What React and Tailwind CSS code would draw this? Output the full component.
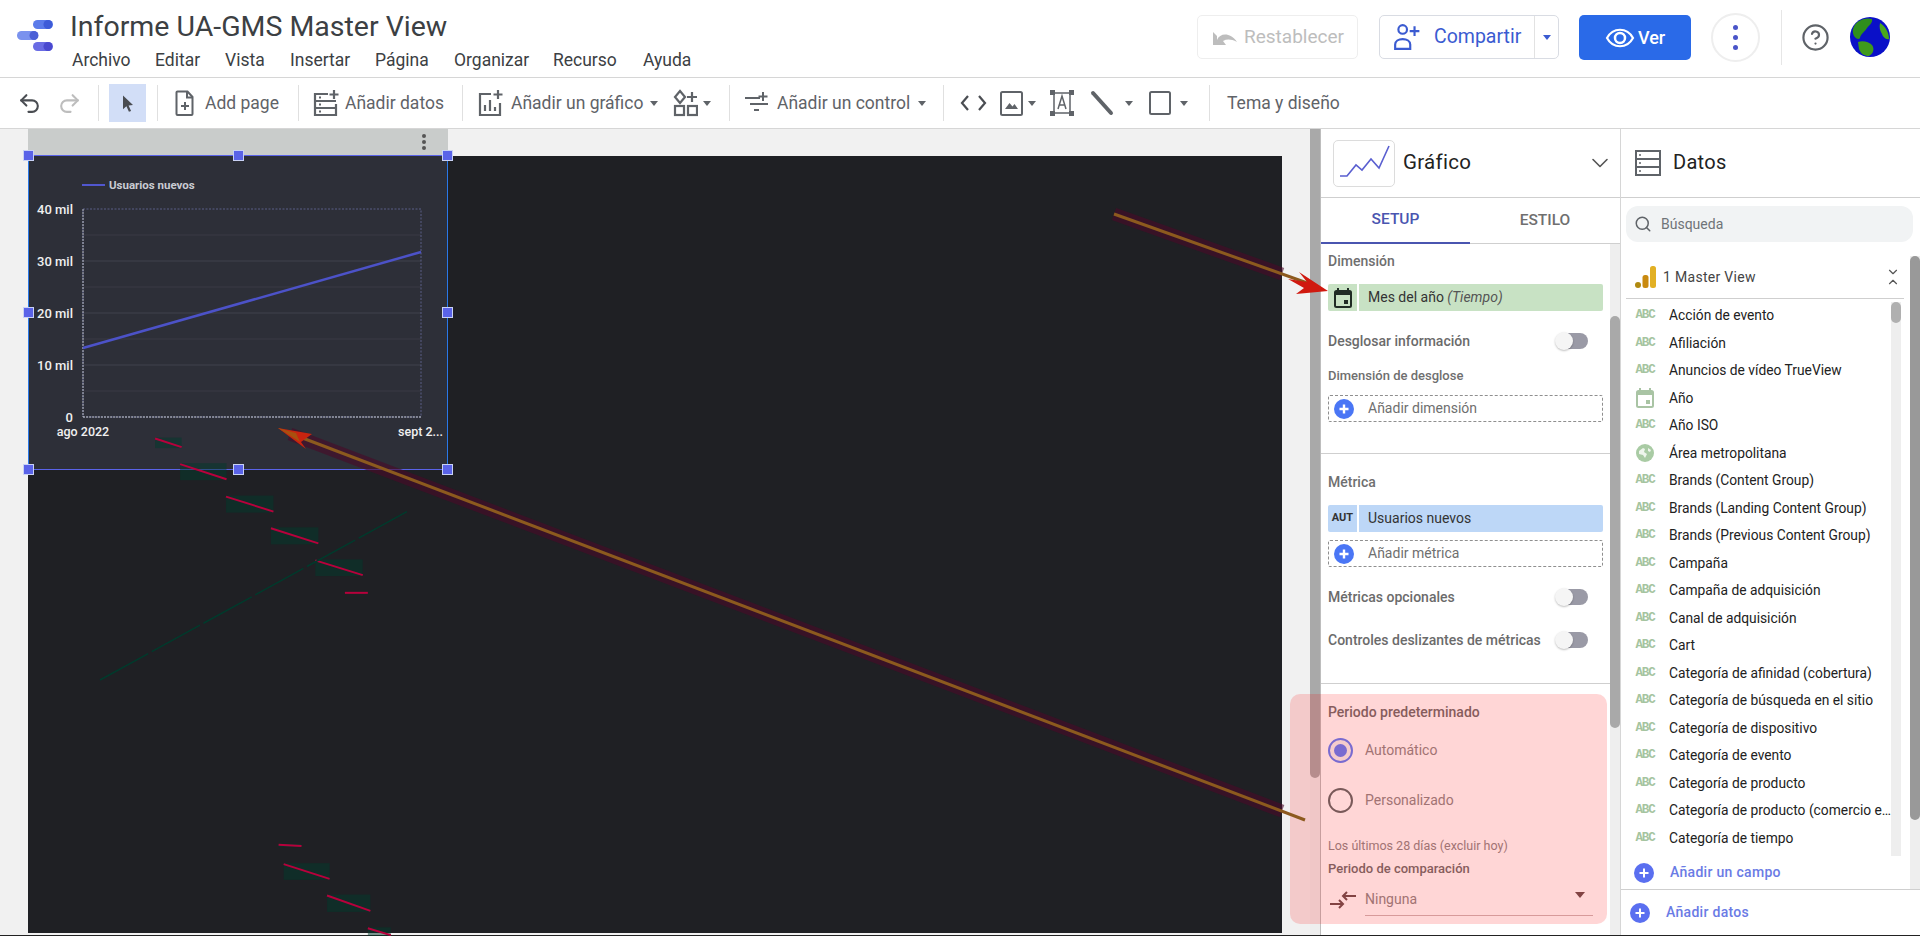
import React from "react";
import { Undo2, Redo2, Search, ChevronDown, ChevronUp, HelpCircle } from "lucide-react";

const Caret = ({ className = "", color = "border-t-[#5f6368]" }) => (
  <span className={`inline-block w-0 h-0 border-l-[4px] border-r-[4px] border-t-[5px] border-l-transparent border-r-transparent ${color} ${className}`} />
);

const Divider = ({ className = "" }) => <div className={`w-px h-[36px] bg-[#e0e0e0] shrink-0 ${className}`} />;

const Ico = ({ w = 24, h = 24, vb = "0 0 24 24", children, className = "" }) => (
  <svg width={w} height={h} viewBox={vb} className={`shrink-0 ${className}`} fill="none">{children}</svg>
);

const menus = [
  ["Archivo", "w-[83px]"],
  ["Editar", "w-[70px]"],
  ["Vista", "w-[65px]"],
  ["Insertar", "w-[85px]"],
  ["Página", "w-[79px]"],
  ["Organizar", "w-[99px]"],
  ["Recurso", "w-[90px]"],
  ["Ayuda", "w-[70px]"],
];

function Logo() {
  return (
    <svg width="38" height="38" viewBox="0 0 38 38" className="shrink-0">
      <rect x="16" y="2" width="20" height="9" rx="4.5" fill="#5b7bea" />
      <circle cx="31" cy="6.5" r="4.5" fill="#3d5bd8" />
      <rect x="0" y="13" width="21" height="9" rx="4.5" fill="#7a92ee" />
      <circle cx="17" cy="17.5" r="4.5" fill="#4a5fd6" />
      <rect x="16" y="24" width="20" height="9" rx="4.5" fill="#6a6ce4" />
      <circle cx="31" cy="28.5" r="4.5" fill="#4a49cf" />
    </svg>
  );
}

function Globe() {
  return (
    <svg width="40" height="40" viewBox="0 0 40 40" className="shrink-0">
      <circle cx="20" cy="20" r="20" fill="#0a10c8" />
      <path d="M9 4c5-3 10-3 13-2 1 4-3 6-5 9-2 4-6 5-7 10-1 2-4 1-6-2-3-6 0-12 5-15z" fill="#2f8f1c" />
      <path d="M8 25c5-2 11 0 14 3 3 4 1 9-3 11-5 0-8-2-10-7z" fill="#3f9a1c" />
      <path d="M30 6c5 3 9 9 9 16-3 1-6-2-7-5-2-3-3-7-2-11z" fill="#4aa81c" />
    </svg>
  );
}

function Toolbar() {
  const g = "#5f6368";
  return (
    <div className="h-[51px] flex items-center border-b border-[#d6d6d6] text-[#5f6368] text-[17.5px] shrink-0">
      <Undo2 size={25} color="#4a4d52" strokeWidth={2} className="ml-[17px] shrink-0" />
      <Redo2 size={25} color="#bdbdbd" strokeWidth={2} className="ml-[15px] shrink-0" />
      <Divider className="ml-[16px]" />
      <div className="ml-[10px] w-[37px] h-[38px] bg-[#d2def7] flex items-center justify-center shrink-0">
        <Ico w={20} h={24}><path d="M6 3l12 11.5-5.3.4 3 6.6-2.6 1.1-3-6.7L6 19.5z" fill="#4a4d52" /></Ico>
      </div>
      <Divider className="ml-[11px]" />
      <Ico w={20} h={26} vb="0 0 20 26" className="ml-[17px]">
        <path d="M2.5 1.5h10l5 5.5v17a1 1 0 0 1-1 1h-14a1 1 0 0 1-1-1v-21.500a1 1 0 0 1 1-1z" stroke={g} strokeWidth="2" />
        <path d="M12 1.500v6h5.500" stroke={g} strokeWidth="2" />
        <path d="M10 12v8M6 16h8" stroke={g} strokeWidth="2" />
      </Ico>
      <span className="ml-[10px] w-[74px] whitespace-nowrap">Add page</span>
      <Divider className="ml-[19px]" />
      <Ico w={26} h={28} vb="0 0 26 28" className="ml-[14px]">
        <path d="M15 5H2v21h21V15M2 12h21M2 19h21" stroke={g} strokeWidth="2.200" />
        <path d="M6 8.500h2M6 15.500h2M6 22.500h2" stroke={g} strokeWidth="2" />
        <path d="M21 1v9M16.500 5.500h9" stroke={g} strokeWidth="2.200" />
      </Ico>
      <span className="ml-[6px] w-[100px] whitespace-nowrap">Añadir datos</span>
      <Divider className="ml-[17px]" />
      <Ico w={25} h={28} vb="0 0 25 28" className="ml-[15px]">
        <path d="M13 5H2v21h20V14" stroke={g} strokeWidth="2.200" />
        <path d="M7 16v6M12 11v11M17 18v4" stroke={g} strokeWidth="2.200" />
        <path d="M20 1v9M15.500 5.500h9" stroke={g} strokeWidth="2.200" />
      </Ico>
      <span className="ml-[8px] w-[132px] whitespace-nowrap">Añadir un gráfico</span>
      <Caret className="ml-[7px]" />
      <Ico w={25} h={28} vb="0 0 25 28" className="ml-[15px]">
        <path d="M7 2l5 6-5 6-5-6z" stroke={g} strokeWidth="2.200" />
        <path d="M19 3v10M14 8h10" stroke={g} strokeWidth="2.200" />
        <rect x="2" y="17" width="9" height="9" stroke={g} strokeWidth="2.200" />
        <rect x="15" y="17" width="9" height="9" stroke={g} strokeWidth="2.200" />
      </Ico>
      <Caret className="ml-[5px]" />
      <Divider className="ml-[18px]" />
      <Ico w={23} h={24} vb="0 0 23 24" className="ml-[15px]">
        <path d="M0 7h15M5 13h18M9 19h5" stroke={g} strokeWidth="2" />
        <path d="M18 1v9M13.500 5.500h9" stroke={g} strokeWidth="2" />
      </Ico>
      <span className="ml-[9px] w-[133px] whitespace-nowrap">Añadir un control</span>
      <Caret className="ml-[8px]" />
      <Divider className="ml-[17px]" />
      <Ico w={27} h={18} vb="0 0 27 18" className="ml-[16px]">
        <path d="M8 2L2 9l6 7M19 2l6 7-6 7" stroke="#4a4d52" strokeWidth="2.200" />
      </Ico>
      <Ico w={23} h={25} vb="0 0 23 25" className="ml-[13px]">
        <rect x="1" y="1" width="21" height="23" rx="1.500" stroke={g} strokeWidth="2" />
        <path d="M5 18l4.500-6 3 3.500 2-2.500 3.500 5z" fill={g} />
      </Ico>
      <Caret className="ml-[5px]" />
      <Ico w={24} h={26} vb="0 0 24 26" className="ml-[14px]">
        <path d="M4 3h16v20H4z" stroke={g} strokeWidth="1.500" />
        <path d="M0 0h5v5H0zM19 0h5v5h-5zM0 21h5v5H0zM19 21h5v5h-5z" fill={g} />
        <path d="M8 19L12 6l4 13M9.300 15h5.400" stroke={g} strokeWidth="1.500" />
      </Ico>
      <Ico w={24} h={26} vb="0 0 24 26" className="ml-[16px]">
        <path d="M3 3l18 20" stroke={g} strokeWidth="4" strokeLinecap="round" />
      </Ico>
      <Caret className="ml-[11px]" />
      <Ico w={22} h={24} vb="0 0 22 24" className="ml-[16px]">
        <rect x="1" y="1" width="20" height="22" rx="1.500" stroke={g} strokeWidth="2" />
      </Ico>
      <Caret className="ml-[9px]" />
      <Divider className="ml-[21px]" />
      <span className="ml-[17px] whitespace-nowrap">Tema y diseño</span>
    </div>
  );
}

function Header() {
  return (
    <div className="h-[78px] flex border-b border-[#d6d6d6] shrink-0">
      <div className="ml-[17px] mt-[18px]"><Logo /></div>
      <div className="ml-[15px]">
        <div className="text-[28.500px] leading-[32px] mt-[11px] text-[#3c4043] whitespace-nowrap">Informe UA-GMS Master View</div>
        <div className="flex mt-[7px] ml-[2px] text-[17.500px] leading-[20px] text-[#3c4043]">
          {menus.map(([m, w]) => <span key={m} className={w}>{m}</span>)}
        </div>
      </div>
      <div className="ml-auto flex items-start">
        <div className="mt-[15px] h-[44px] w-[161px] border border-[#eeeeee] rounded-[5px] flex items-center pl-[14px] text-[#bdbdbd] text-[19px]">
          <Ico w={26} h={16} vb="0 0 26 16"><path d="M5 11c3-7 13-8 20 2-6-3-10-3-14-1l3 4H1V3l4 4z" fill="#bdbdbd" /></Ico>
          <span className="ml-[6px] whitespace-nowrap">Restablecer</span>
        </div>
        <div className="ml-[21px] mt-[15px] h-[44px] w-[180px] border border-[#d9dce3] rounded-[5px] flex items-center text-[#3b5bd1] text-[19.500px]">
          <Ico w={28} h={28} vb="0 0 24 26" className="ml-[13px]">
            <circle cx="8" cy="6" r="4" stroke="#3b5bd1" strokeWidth="2" />
            <path d="M1 24v-4c0-3 3-5 7-5s7 2 7 5v4z" stroke="#3b5bd1" strokeWidth="2" />
            <path d="M19 3v9M14.500 7.500h9" stroke="#3b5bd1" strokeWidth="2" />
          </Ico>
          <span className="ml-[13px] w-[100px] whitespace-nowrap">Compartir</span>
          <div className="h-full w-px bg-[#e2e2e2] ml-auto" />
          <Caret className="ml-[8px] mr-[7px]" color="border-t-[#3b5bd1]" />
        </div>
        <div className="ml-[20px] mt-[15px] h-[45px] w-[112px] bg-[#2a6ae8] rounded-[5px] flex items-center pl-[26px] text-white text-[18px] font-medium">
          <Ico w={30} h={22} vb="0 0 30 22">
            <path d="M2 11c6-11 20-11 26 0-6 11-20 11-26 0z" stroke="white" strokeWidth="2.200" />
            <circle cx="15" cy="11" r="5" stroke="white" strokeWidth="2.500" />
          </Ico>
          <span className="ml-[3px]">Ver</span>
        </div>
        <div className="ml-[20px] mt-[13px] w-[49px] h-[49px] rounded-full border-2 border-[#eeeeee] flex flex-col items-center justify-center gap-[5px]">
          <span className="w-[5px] h-[5px] rounded-full bg-[#4a55c8]" />
          <span className="w-[5px] h-[5px] rounded-full bg-[#4a55c8]" />
          <span className="w-[5px] h-[5px] rounded-full bg-[#4a55c8]" />
        </div>
        <div className="ml-[21px] mt-[10px] w-px h-[55px] bg-[#e6e6e6]" />
        <HelpCircle size={29} color="#5f6368" strokeWidth={1.8} className="ml-[19px] mt-[23px]" />
        <div className="ml-[20px] mr-[30px] mt-[17px]"><Globe /></div>
      </div>
    </div>
  );
}

const handlePos = [
  "left-[-6px] top-[-6px]", "left-[204px] top-[-6px]", "left-[413px] top-[-6px]",
  "left-[-6px] top-[151px]", "left-[413px] top-[151px]",
  "left-[-6px] top-[308px]", "left-[204px] top-[308px]", "left-[413px] top-[308px]",
];

function ChartCard() {
  const minor = [235, 287, 339, 391];
  const major = [261, 313, 365];
  const ox = 28, oy = 155;
  const lbl = [["40 mil", 209], ["30 mil", 261], ["20 mil", 313], ["10 mil", 365], ["0", 417]];
  return (
    <div className="absolute left-[28px] top-[26px] w-[420px] h-[315px] bg-[#2d2f38] border-y border-y-[#5a63e8] border-x border-x-[#2a78e8]">
      <svg width="419" height="314" className="absolute left-[-1px] top-[-1px]" fontFamily="Roboto, sans-serif">
        <line x1={82 - ox} x2={105 - ox} y1={185 - oy} y2={185 - oy} stroke="#5157cf" strokeWidth="2" />
        <text x={109 - ox} y={189 - oy} fill="#c9cbd2" fontSize="11.500" fontWeight="700">Usuarios nuevos</text>
        {major.map((y) => <line key={y} x1={83 - ox} x2={421 - ox} y1={y - oy} y2={y - oy} stroke="#40424c" />)}
        {minor.map((y) => <line key={y} x1={83 - ox} x2={421 - ox} y1={y - oy} y2={y - oy} stroke="#3a3a44" />)}
        <rect x={83 - ox} y={209 - oy} width="338" height="208" fill="none" stroke="#5b5f86" strokeDasharray="2 1.500" />
        <line x1={83 - ox} x2={83 - ox} y1={209 - oy} y2={417 - oy} stroke="#b9bcc6" strokeDasharray="2 1" />
        <line x1={83 - ox} x2={421 - ox} y1={417 - oy} y2={417 - oy} stroke="#c5c8d0" strokeDasharray="2 1" />
        <line x1={83 - ox} y1={348 - oy} x2={421 - ox} y2={252 - oy} stroke="#4c52c8" strokeWidth="2.500" />
        {lbl.map(([t, y]) => (
          <text key={t} x={73 - ox} y={y + 4.500 - oy} fill="#f0f0f0" fontSize="13" fontWeight="500" textAnchor="end">{t}</text>
        ))}
        <text x={83 - ox} y={436 - oy} fill="#f0f0f0" fontSize="12.500" fontWeight="500" textAnchor="middle">ago 2022</text>
        <text x={398 - ox} y={436 - oy} fill="#f0f0f0" fontSize="12.500" fontWeight="500">sept 2...</text>
      </svg>
      {handlePos.map((c) => (
        <span key={c} className={`absolute ${c} w-[11px] h-[11px] bg-[#5a63e8] border border-[#c9d2f5]`} />
      ))}
    </div>
  );
}

function Canvas() {
  return (
    <div className="w-[1310px] bg-[#f1f1f1] relative shrink-0">
      <div className="ml-[28px] w-[420px] h-[26px] bg-[#c9cccb] flex justify-end items-center pr-[22px]">
        <div className="flex flex-col gap-[2px]">
          <span className="w-[4px] h-[4px] rounded-full bg-[#555]" />
          <span className="w-[4px] h-[4px] rounded-full bg-[#555]" />
          <span className="w-[4px] h-[4px] rounded-full bg-[#555]" />
        </div>
      </div>
      <div className="ml-[28px] mt-px w-[1254px] h-[777px] bg-[#1f2024]" />
      <ChartCard />
    </div>
  );
}

const Label = ({ children, className = "" }) => (
  <div className={`leading-[16px] font-medium text-[#6f6f6f] whitespace-nowrap ${className}`}>{children}</div>
);

const Toggle = () => (
  <div className="relative w-[33px] h-[16px] shrink-0">
    <div className="absolute left-[8px] top-0 right-0 h-[16px] rounded-r-full bg-[#9a9aa6]" />
    <div className="absolute left-0 top-[-1px] w-[18px] h-[18px] rounded-full bg-[#f5f5f5] shadow-[0_1px_2px_rgba(0,0,0,0.25)]" />
  </div>
);

const ToggleRow = ({ text, className = "" }) => (
  <div className={`flex items-center h-[20px] mr-[22px] ${className}`}>
    <span className="text-[14px] font-medium text-[#6b6b6b] whitespace-nowrap">{text}</span>
    <span className="ml-auto"><Toggle /></span>
  </div>
);

const Plus = ({ r = 10, bg = "#4a76f5", sw = 2.400 }) => (
  <svg width={r * 2} height={r * 2} viewBox="0 0 20 20" className="shrink-0">
    <circle cx="10" cy="10" r="10" fill={bg} />
    <path d="M10 5.500v9M5.500 10h9" stroke="white" strokeWidth={sw} />
  </svg>
);

const AddBox = ({ text, className = "" }) => (
  <div className={`w-[275px] h-[27px] border border-dashed border-[#8f8f8f] rounded-[2px] flex items-center pl-[5px] ${className}`}>
    <Plus />
    <span className="ml-[14px] text-[14px] text-[#6f6f6f] whitespace-nowrap">{text}</span>
  </div>
);

const Chip = ({ icon, bg, children, className = "" }) => (
  <div className={`w-[275px] h-[27px] rounded-[2px] flex items-center text-[14px] text-[#333] ${bg} ${className}`}>
    <div className="w-[31px] h-full flex items-center justify-center border-r-2 border-white shrink-0">{icon}</div>
    <span className="ml-[9px] whitespace-nowrap">{children}</span>
  </div>
);

const Cal = ({ color = "#1f2b24" }) => (
  <svg width="18" height="20" viewBox="0 0 18 20">
    <path d="M4 0v3M14 0v3" stroke={color} strokeWidth="2" />
    <rect x="1" y="3" width="16" height="16" rx="1.500" stroke={color} strokeWidth="2" fill="none" />
    <path d="M1 4h16v3H1z" fill={color} />
    <rect x="10" y="12" width="4" height="4" fill={color} />
  </svg>
);

const Radio = ({ on, text, className = "" }) => (
  <div className={`flex items-center ${className}`}>
    <div className={`w-[25px] h-[25px] rounded-full border-2 ${on ? "border-[#6080f8] bg-[#f4f4f4]" : "border-[#606b6b]"} flex items-center justify-center shrink-0`}>
      {on && <span className="w-[13px] h-[13px] rounded-full bg-[#6080f8]" />}
    </div>
    <span className="ml-[12px] text-[14px] text-[#8f8a8a]">{text}</span>
  </div>
);

function Properties() {
  return (
    <div className="w-[300px] shrink-0 flex flex-col border-r border-[#d6d6d6] h-full">
      <div className="h-[69px] flex items-center border-b border-[#cfcfcf] shrink-0">
        <div className="ml-[12px] w-[62px] h-[47px] border border-[#dcdcdc] rounded-[5px] flex items-center justify-center">
          <svg width="52" height="40" viewBox="0 0 52 40" fill="none">
            <path d="M2 33h7l9-11 6 5 9-11 8 9L51 3" stroke="#5a5fd0" strokeWidth="1.600" />
          </svg>
        </div>
        <span className="ml-[8px] mb-[2px] text-[20.500px] text-[#222] tracking-[0.3px]">Gráfico</span>
        <ChevronDown size={28} color="#555" strokeWidth={1.4} className="ml-auto mr-[6px]" />
      </div>
      <div className="h-[46px] flex border-b border-[#cfcfcf] shrink-0 text-[15.500px] font-medium">
        <div className="w-[149px] flex items-center justify-center text-[#4a55b0] border-b-[2px] border-[#4a55b0] h-[46px]">SETUP</div>
        <div className="flex-1 flex items-center justify-center text-[#6f6f6f]">ESTILO</div>
      </div>
      <div className="flex flex-1 min-h-0">
        <div className="flex-1 min-w-0">
          <div className="pl-[7px]">
            <Label className="mt-[9px] text-[14px]">Dimensión</Label>
            <Chip className="mt-[15px]" bg="bg-[#c8e2c4]" icon={<Cal />}>Mes del año <i className="text-[#555]">(Tiempo)</i></Chip>
            <ToggleRow className="mt-[20px]" text="Desglosar información" />
            <Label className="mt-[17px] text-[13px]">Dimensión de desglose</Label>
            <AddBox className="mt-[11px]" text="Añadir dimensión" />
          </div>
          <div className="mt-[31px] h-px bg-[#cfcfcf]" />
          <div className="pl-[7px]">
            <Label className="mt-[20px] text-[14px]">Métrica</Label>
            <Chip className="mt-[15px]" bg="bg-[#bdd7f7]" icon={<span className="text-[11px] font-bold text-[#333]">AUT</span>}>Usuarios nuevos</Chip>
            <AddBox className="mt-[8px]" text="Añadir métrica" />
            <ToggleRow className="mt-[20px]" text="Métricas opcionales" />
            <ToggleRow className="mt-[23px]" text="Controles deslizantes de métricas" />
          </div>
          <div className="mt-[33px] h-px bg-[#cfcfcf]" />
          <div className="pl-[7px]">
            <Label className="mt-[20px] text-[14px]">Periodo predeterminado</Label>
            <Radio className="mt-[18px]" on text="Automático" />
            <Radio className="mt-[25px]" text="Personalizado" />
            <div className="mt-[25px] text-[12.500px] leading-[16px] text-[#8f8a8a]">Los últimos 28 días (excluir hoy)</div>
            <Label className="mt-[7px] text-[13px]">Periodo de comparación</Label>
            <div className="flex items-center mt-[7px]">
              <svg width="26" height="20" viewBox="0 0 26 20" fill="none" className="ml-[2px] shrink-0">
                <path d="M13 6h13M17 2l-4 4 4 4M0 14h13M9 10l4 4-4 4" stroke="#6a5050" strokeWidth="2" />
              </svg>
              <div className="ml-[9px] w-[228px] h-[32px] border-b border-[#d0b8b8] flex items-center justify-between pr-[8px]">
                <span className="text-[14px] text-[#8f8a8a]">Ninguna</span>
                <Caret className="mb-[10px] border-l-[5px] border-r-[5px] border-t-[6px]" color="border-t-[#6a5050]" />
              </div>
            </div>
          </div>
        </div>
        <div className="w-[10px] bg-[#eeeeee] shrink-0">
          <div className="mt-[72px] h-[412px] rounded-full bg-[#a9a9a9]" />
        </div>
      </div>
    </div>
  );
}

const fields = [
  ["abc", "Acción de evento"], ["abc", "Afiliación"], ["abc", "Anuncios de vídeo TrueView"], ["cal", "Año"],
  ["abc", "Año ISO"], ["geo", "Área metropolitana"], ["abc", "Brands (Content Group)"], ["abc", "Brands (Landing Content Group)"],
  ["abc", "Brands (Previous Content Group)"], ["abc", "Campaña"], ["abc", "Campaña de adquisición"], ["abc", "Canal de adquisición"],
  ["abc", "Cart"], ["abc", "Categoría de afinidad (cobertura)"], ["abc", "Categoría de búsqueda en el sitio"], ["abc", "Categoría de dispositivo"],
  ["abc", "Categoría de evento"], ["abc", "Categoría de producto"], ["abc", "Categoría de producto (comercio e…"], ["abc", "Categoría de tiempo"],
];

const FieldIcon = ({ t }) => {
  if (t === "cal") return <Cal color="#a9c4a4" />;
  if (t === "geo")
    return (
      <svg width="18" height="18" viewBox="0 0 18 18">
        <circle cx="9" cy="9" r="9" fill="#a9cba4" />
        <path d="M3 7l4-3 2 1-1 3 3 2-2 4-2-3-4-1zM12 4l3 2-1 2-2-1z" fill="#eef5ec" />
      </svg>
    );
  return <span className="font-['Liberation_Mono'] text-[12.500px] font-bold text-[#a5c49f] tracking-[-1.200px]">ABC</span>;
};

function DataPanel() {
  return (
    <div className="flex-1 min-w-0 flex flex-col h-full">
      <div className="h-[69px] flex items-center border-b border-[#cfcfcf] shrink-0">
        <svg width="26" height="26" viewBox="0 0 26 26" fill="none" className="ml-[14px] shrink-0">
          <rect x="1" y="1" width="24" height="24" stroke="#5f6368" strokeWidth="2" />
          <path d="M1 9h24M1 17h24" stroke="#5f6368" strokeWidth="2" />
          <path d="M4 5h2M4 13h2M4 21h2" stroke="#5f6368" strokeWidth="1.500" />
        </svg>
        <span className="ml-[12px] mb-[2px] text-[20px] text-[#222] tracking-[0.3px]">Datos</span>
      </div>
      <div className="mt-[8px] ml-[5px] w-[287px] h-[36px] bg-[#f1f3f4] rounded-[12px] flex items-center pl-[8px] shrink-0">
        <Search size={18} color="#5f6368" strokeWidth={2} />
        <span className="ml-[9px] text-[14px] text-[#6f7378]">Búsqueda</span>
      </div>
      <div className="flex-1 min-h-0 flex mt-[14px]">
        <div className="flex-1 min-w-0 flex flex-col">
          <div className="ml-[5px] mr-[6px] h-[43px] flex items-center border-b border-[#cfcfcf] shrink-0 relative">
            <svg width="22" height="24" viewBox="0 0 22 24" className="ml-[9px] shrink-0">
              <circle cx="3" cy="20" r="3" fill="#b08a10" />
              <rect x="7.500" y="10" width="6" height="13" rx="2.500" fill="#c98a10" />
              <rect x="15" y="1" width="6" height="22" rx="2.500" fill="#e2b024" />
            </svg>
            <span className="ml-[6px] text-[14px] text-[#444] tracking-[0.3px]">1 Master View</span>
            <div className="ml-auto mr-[4px] flex flex-col items-center">
              <ChevronDown size={14} color="#555" strokeWidth={2} className="mb-[-4px]" />
              <ChevronUp size={14} color="#555" strokeWidth={2} />
            </div>
          </div>
          <div className="flex-1 min-h-0 flex">
            <div className="flex-1 min-w-0 overflow-hidden pt-[3px]">
              {fields.map(([t, n]) => (
                <div key={n} className="h-[27.500px] flex items-center">
                  <div className="w-[18px] ml-[15px] flex justify-center shrink-0"><FieldIcon t={t} /></div>
                  <span className="ml-[15px] text-[13.800px] text-[#222] whitespace-nowrap">{n}</span>
                </div>
              ))}
            </div>
            <div className="w-[10px] mr-[9px] h-[554px] bg-[#eeeeee] shrink-0 mt-[3px]">
              <div className="h-[21px] rounded-full bg-[#b0b0b0]" />
            </div>
          </div>
          <div className="flex items-center h-[33px] shrink-0">
            <span className="ml-[13px]"><Plus bg="#5a6ff0" sw={2} /></span>
            <span className="ml-[16px] text-[14px] font-medium text-[#6a7be5] tracking-[0.3px]">Añadir un campo</span>
          </div>
        </div>
        <div className="w-[10px] bg-[#eeeeee] shrink-0">
          <div className="h-[564px] rounded-full bg-[#999999]" />
        </div>
      </div>
      <div className="h-[46px] border-t border-[#cfcfcf] flex items-center shrink-0">
        <span className="ml-[9px]"><Plus bg="#5a6ff0" sw={2} /></span>
        <span className="ml-[16px] text-[14px] font-medium text-[#6a7be5] tracking-[0.3px]">Añadir datos</span>
      </div>
    </div>
  );
}

const zm = (x, y) => [100 + x / 1.96, 400 + y / 2.93];
const redTicks = [
  [108, 113, 160, 138], [157, 188, 248, 232], [247, 283, 340, 327], [335, 376, 428, 420], [422, 470, 515, 513],
  [445, 1452, 530, 1497], [360, 1360, 450, 1403], [525, 1548, 570, 1568], [480, 565, 525, 565], [350, 1303, 395, 1307],
];

function Overlay() {
  return (
    <svg width="1920" height="936" className="absolute left-0 top-0 pointer-events-none">
      {redTicks.map(([a, b, c, d]) => {
        const [x1, y1] = zm(a, b);
        const [x2, y2] = zm(c, d);
        return (
          <g key={a + "-" + b}>
            <rect x={Math.min(x1, x2)} y={Math.min(y1, y2) - 1} width={Math.abs(x2 - x1)} height={Math.abs(y2 - y1) + 2} fill="#013a2c" opacity="0.5" />
            <line x1={x1} y1={y1} x2={x2} y2={y2} stroke="#b8003c" strokeWidth="2" />
          </g>
        );
      })}
      <line x1="100" y1="680" x2="410" y2="510" stroke="#013a2c" strokeWidth="1.500" strokeDasharray="55 4" />
      <line x1="1282" y1="811" x2="290" y2="434" stroke="#4a0a28" strokeWidth="13" opacity="0.6" />
      <line x1="1114" y1="214" x2="1282" y2="274" stroke="#4a0a28" strokeWidth="13" opacity="0.6" />
      <line x1="1114" y1="214" x2="1310" y2="284" stroke="#8c5a1e" strokeWidth="3" />
      <line x1="1305" y1="820" x2="292" y2="434" stroke="#8c5a1e" strokeWidth="3" />
      <path d="M1328 291L1299 272 1307 282 1288 279 1304 288 1296 294z" fill="#d0190f" />
      <path d="M278 428L312 434 301 442 306 449z" fill="#c8240f" />
      <path d="M278 428L296 433 300 442z" fill="#a8500f" />
    </svg>
  );
}

export default function App() {
  return (
    <div className="relative w-[1920px] h-[936px] overflow-hidden bg-white font-['Roboto',sans-serif]">
      <div className="h-[935px] flex flex-col">
        <Header />
        <Toolbar />
        <div className="flex-1 min-h-0 flex">
          <Canvas />
          <div className="w-[11px] h-full bg-[#eeeeee] shrink-0 border-r border-[#bdbdbd]">
            <div className="h-[649px] rounded-b-full bg-[#a9a9a9]" />
          </div>
          <Properties />
          <DataPanel />
        </div>
      </div>
      <div className="h-px bg-[#222]" />
      <div className="absolute left-[1290px] top-[694px] w-[317px] h-[230px] rounded-[10px] bg-[rgba(255,0,0,0.16)]" />
      <Overlay />
    </div>
  );
}
